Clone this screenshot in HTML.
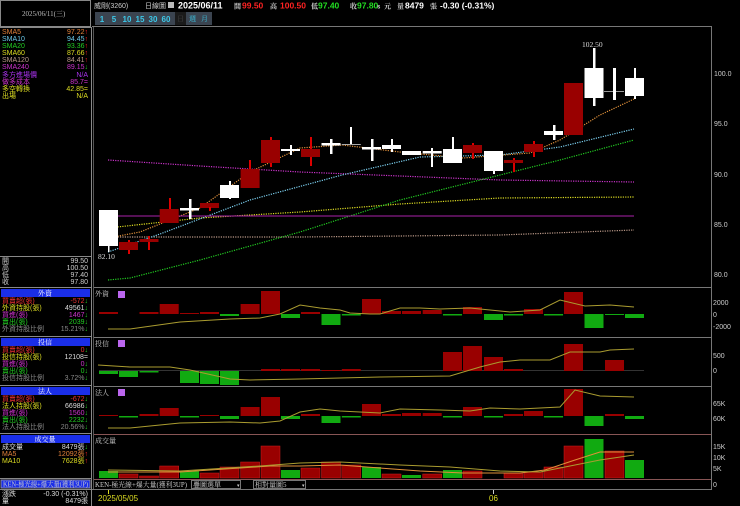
<!DOCTYPE html>
<html><head><meta charset="utf-8"><style>
html,body{margin:0;padding:0;background:#000;width:740px;height:506px;overflow:hidden}
svg{display:block}
text{font-family:"Liberation Sans","Noto Sans CJK TC",sans-serif;font-size:7px}
.c{font-family:"Liberation Serif","Noto Serif CJK SC",serif;font-size:7px}
</style></head><body>
<svg width="740" height="506" viewBox="0 0 740 506" xmlns="http://www.w3.org/2000/svg">
<rect width="740" height="506" fill="#000"/>
<rect x="0.5" y="0.5" width="90" height="26" fill="none" stroke="#888"/>
<text x="22" y="16" fill="#bbb" class="c">2025/06/11(三)</text>
<line x1="91.5" y1="27" x2="91.5" y2="506" stroke="#888"/>
<line x1="0" y1="27.5" x2="91" y2="27.5" stroke="#888"/>
<g class="c">
<text x="2" y="34" fill="#e0803a">SMA5</text><text x="88" y="34" fill="#e0803a" text-anchor="end">97.22<tspan fill="#f22">↑</tspan></text>
<text x="2" y="41" fill="#6cc8e8">SMA10</text><text x="88" y="41" fill="#6cc8e8" text-anchor="end">94.45<tspan fill="#f22">↑</tspan></text>
<text x="2" y="48" fill="#2c2">SMA20</text><text x="88" y="48" fill="#2c2" text-anchor="end">93.36<tspan fill="#f22">↑</tspan></text>
<text x="2" y="55" fill="#dd2">SMA60</text><text x="88" y="55" fill="#dd2" text-anchor="end">87.66<tspan fill="#f22">↑</tspan></text>
<text x="2" y="62" fill="#b98">SMA120</text><text x="88" y="62" fill="#b98" text-anchor="end">84.41<tspan fill="#f22">↑</tspan></text>
<text x="2" y="69" fill="#c3c">SMA240</text><text x="88" y="69" fill="#c3c" text-anchor="end">89.15<tspan fill="#2c2">↓</tspan></text>
<text x="2" y="77" fill="#a3e">多方進場價</text><text x="88" y="77" fill="#a3e" text-anchor="end">N/A</text>
<text x="2" y="84" fill="#c3c">做多成本</text><text x="88" y="84" fill="#c3c" text-anchor="end">85.7=</text>
<text x="2" y="91" fill="#dd2">多空轉換</text><text x="88" y="91" fill="#dd2" text-anchor="end">42.85=</text>
<text x="2" y="98" fill="#dd2">出場</text><text x="88" y="98" fill="#dd2" text-anchor="end">N/A</text>
</g>
<line x1="0" y1="256.5" x2="91" y2="256.5" stroke="#888"/>
<g class="c" fill="#ccc">
<text x="2" y="263">開</text><text x="88" y="263" text-anchor="end">99.50</text>
<text x="2" y="270">高</text><text x="88" y="270" text-anchor="end">100.50</text>
<text x="2" y="277">低</text><text x="88" y="277" text-anchor="end">97.40</text>
<text x="2" y="284">收</text><text x="88" y="284" text-anchor="end">97.80</text>
</g>
<line x1="0" y1="287.5" x2="91" y2="287.5" stroke="#888"/>
<rect x="1" y="289" width="89" height="8" fill="#1a2ee8"/>
<text x="45" y="295.5" fill="#fff" text-anchor="middle" class="c">外資</text>
<g class="c">
<text x="2" y="303" fill="#e33">買賣超(張)</text><text x="88" y="303" fill="#e33" text-anchor="end">-572<tspan fill="#2c2">↓</tspan></text>
<text x="2" y="310" fill="#dd2">外資持股(張)</text><text x="88" y="310" fill="#ddd" text-anchor="end">49561<tspan fill="#2c2">↓</tspan></text>
<text x="2" y="317" fill="#c3c">買進(張)</text><text x="88" y="317" fill="#c3c" text-anchor="end">1467<tspan fill="#2c2">↓</tspan></text>
<text x="2" y="324" fill="#2c2">賣出(張)</text><text x="88" y="324" fill="#2c2" text-anchor="end">2039<tspan fill="#2c2">↓</tspan></text>
<text x="2" y="331" fill="#888">外資持股比例</text><text x="88" y="331" fill="#888" text-anchor="end">15.21%<tspan fill="#2c2">↓</tspan></text>
</g>
<line x1="0" y1="336.5" x2="91" y2="336.5" stroke="#888"/>
<rect x="1" y="338" width="89" height="8" fill="#1a2ee8"/>
<text x="45" y="344.5" fill="#fff" text-anchor="middle" class="c">投信</text>
<g class="c">
<text x="2" y="352" fill="#e33">買賣超(張)</text><text x="88" y="352" fill="#e33" text-anchor="end">0<tspan fill="#2c2">↓</tspan></text>
<text x="2" y="359" fill="#dd2">投信持股(張)</text><text x="88" y="359" fill="#ddd" text-anchor="end">12108=</text>
<text x="2" y="366" fill="#c3c">買進(張)</text><text x="88" y="366" fill="#c3c" text-anchor="end">0<tspan fill="#2c2">↓</tspan></text>
<text x="2" y="373" fill="#2c2">賣出(張)</text><text x="88" y="373" fill="#2c2" text-anchor="end">0<tspan fill="#2c2">↓</tspan></text>
<text x="2" y="380" fill="#888">投信持股比例</text><text x="88" y="380" fill="#888" text-anchor="end">3.72%<tspan fill="#2c2">↓</tspan></text>
</g>
<line x1="0" y1="385.5" x2="91" y2="385.5" stroke="#888"/>
<rect x="1" y="387" width="89" height="8" fill="#1a2ee8"/>
<text x="45" y="393.5" fill="#fff" text-anchor="middle" class="c">法人</text>
<g class="c">
<text x="2" y="401" fill="#e33">買賣超(張)</text><text x="88" y="401" fill="#e33" text-anchor="end">-672<tspan fill="#2c2">↓</tspan></text>
<text x="2" y="408" fill="#dd2">法人持股(張)</text><text x="88" y="408" fill="#ddd" text-anchor="end">66986<tspan fill="#2c2">↓</tspan></text>
<text x="2" y="415" fill="#c3c">買進(張)</text><text x="88" y="415" fill="#c3c" text-anchor="end">1560<tspan fill="#2c2">↓</tspan></text>
<text x="2" y="422" fill="#2c2">賣出(張)</text><text x="88" y="422" fill="#2c2" text-anchor="end">2232<tspan fill="#2c2">↓</tspan></text>
<text x="2" y="429" fill="#888">法人持股比例</text><text x="88" y="429" fill="#888" text-anchor="end">20.56%<tspan fill="#2c2">↓</tspan></text>
</g>
<line x1="0" y1="433.5" x2="91" y2="433.5" stroke="#888"/>
<rect x="1" y="435" width="89" height="8" fill="#1a2ee8"/>
<text x="45" y="441.5" fill="#fff" text-anchor="middle" class="c">成交量</text>
<g class="c">
<text x="2" y="449" fill="#ddd">成交量</text><text x="88" y="449" fill="#ddd" text-anchor="end">8479張<tspan fill="#2c2">↓</tspan></text>
<text x="2" y="456" fill="#e0803a">MA5</text><text x="88" y="456" fill="#e0803a" text-anchor="end">12092張<tspan fill="#f22">↑</tspan></text>
<text x="2" y="463" fill="#dd2">MA10</text><text x="88" y="463" fill="#dd2" text-anchor="end">7628張<tspan fill="#f22">↑</tspan></text>
</g>
<line x1="0" y1="478.5" x2="91" y2="478.5" stroke="#888"/>
<rect x="1" y="480" width="89" height="8" fill="#1a2ee8" stroke="#88a"/>
<text x="3" y="486.5" fill="#ccc" class="c" textLength="85" lengthAdjust="spacingAndGlyphs">KEN-極光線+爆大量(獲利3UP)</text>
<line x1="0" y1="489.5" x2="91" y2="489.5" stroke="#888"/>
<g class="c" fill="#ddd">
<text x="2" y="496">漲跌</text><text x="88" y="496" text-anchor="end">-0.30 (-0.31%)</text>
<text x="2" y="503">量</text><text x="88" y="503" text-anchor="end">8479張</text>
</g>

<g class="c">
<text x="94" y="8" fill="#ccc">威剛(3260)</text>
<text x="145" y="8" fill="#ccc">日線圖</text>
<rect x="168" y="2" width="6" height="6" fill="#bbb"/>
</g>
<text x="178" y="8.5" fill="#fff" font-weight="bold" style="font-size:9px">2025/06/11</text>
<g font-weight="bold">
<text x="234" y="8.5" fill="#ccc" class="c">開</text><text x="242" y="8.5" fill="#f22" style="font-size:8.5px">99.50</text>
<text x="270" y="8.5" fill="#ccc" class="c">高</text><text x="280" y="8.5" fill="#f22" style="font-size:8.5px">100.50</text>
<text x="311" y="8.5" fill="#ccc" class="c">低</text><text x="318" y="8.5" fill="#2d2" style="font-size:8.5px">97.40</text>
<text x="350" y="8.5" fill="#ccc" class="c">收</text><text x="357" y="8.5" fill="#2d2" style="font-size:8.5px">97.80</text>
<text x="377" y="8.5" fill="#ccc" style="font-size:6px">s</text><text x="384" y="8.5" fill="#ccc" class="c">元</text>
<text x="397" y="8.5" fill="#ccc" class="c">量</text><text x="405" y="8.5" fill="#fff" style="font-size:8.5px">8479</text><text x="430" y="8.5" fill="#ccc" class="c">張</text>
<text x="440" y="8.5" fill="#fff" style="font-size:8.5px">-0.30 (-0.31%)</text>
</g>
<g>
<rect x="95" y="12" width="117" height="13" fill="#3b4450"/>
<rect x="175" y="12" width="11" height="13" fill="#1a1a1a"/>
<g fill="#3cc8e8" font-weight="bold" text-anchor="middle">
<text x="102" y="22" style="font-size:8px">1</text><text x="114" y="22" style="font-size:8px">5</text><text x="127" y="22" style="font-size:8px">10</text><text x="140" y="22" style="font-size:8px">15</text><text x="153" y="22" style="font-size:8px">30</text><text x="166" y="22" style="font-size:8px">60</text>
</g>
<text x="177" y="21" fill="#444" class="c">日</text><text x="189" y="21" fill="#3cc8e8" class="c">週</text><text x="201" y="21" fill="#3cc8e8" class="c">月</text>
</g>
<line x1="92" y1="26.5" x2="712" y2="26.5" stroke="#777"/>
<line x1="711.5" y1="26" x2="711.5" y2="490" stroke="#777"/>
<line x1="93.5" y1="27" x2="93.5" y2="490" stroke="#555"/>
<g fill="#ccc" class="c">
<text x="714" y="76">100.0</text><text x="714" y="126">95.0</text><text x="714" y="177">90.0</text><text x="714" y="227">85.0</text><text x="714" y="277">80.0</text>
</g>
<g fill="none" stroke-width="1.2" stroke-dasharray="1.2 1.2">
<polyline stroke="#c3c" points="108,160 200,166 300,172 400,176 500,180 634,182"/>
<polyline stroke="#b98" points="108,237 200,237 300,237 400,236 500,235 634,230"/>
<polyline stroke="#dd2" points="108,228 200,218 300,212 400,204 500,198 634,197"/>
<polyline stroke="#2c2" points="108,280 130,278 200,260 300,232 400,200 480,180 560,160 634,140"/>
<polyline stroke="#7cd0f0" points="108,252 160,234 250,200 342,175 420,157 500,155 560,147 634,129"/>
<polyline stroke="#e0903a" points="108,238 140,232 200,208 250,172 300,148 342,145 400,152 463,158 530,153 560,140 600,115 634,99"/>
</g>
<line x1="108" y1="216" x2="634" y2="216" stroke="#a2a" stroke-width="1"/>
<line x1="94" y1="287.5" x2="711" y2="287.5" stroke="#777"/>
<g>
<rect x="99" y="210" width="19" height="36" fill="#fff"/><rect x="108" y="246" width="1.5" height="6" fill="#fff"/>
<rect x="128" y="240" width="2" height="14" fill="#d00"/><rect x="119" y="242" width="19" height="8" fill="#900"/>
<rect x="148" y="236" width="2" height="14" fill="#d00"/><rect x="139.5" y="239" width="19" height="3" fill="#900"/>
<rect x="169" y="198" width="2" height="12" fill="#d00"/><rect x="159.7" y="209" width="19" height="14" fill="#900"/>
<rect x="189" y="199" width="2.5" height="20" fill="#fff"/><rect x="180" y="208" width="19" height="2.5" fill="#fff"/>
<rect x="200" y="203" width="19" height="5" fill="#900"/><rect x="209" y="207" width="2" height="4" fill="#d00"/>
<rect x="229" y="181" width="2" height="18" fill="#fff"/><rect x="220" y="185" width="19" height="13" fill="#fff"/>
<rect x="249" y="160" width="2" height="10" fill="#d00"/><rect x="240.6" y="169" width="19" height="19" fill="#900"/>
<rect x="270" y="137" width="2" height="30" fill="#d00"/><rect x="261" y="140" width="19" height="23" fill="#900"/>
<rect x="290" y="145" width="2" height="10" fill="#fff"/><rect x="281" y="149" width="19" height="2" fill="#fff"/>
<rect x="310" y="137" width="2" height="29" fill="#d00"/><rect x="301" y="149" width="19" height="8" fill="#900"/>
<rect x="330" y="139" width="2.5" height="15" fill="#fff"/><rect x="321.5" y="143" width="19" height="2.5" fill="#fff"/>
<rect x="350" y="127" width="2" height="18" fill="#fff"/><rect x="341.8" y="144" width="19" height="1" fill="#aaa"/>
<rect x="371" y="139" width="2.5" height="22" fill="#fff"/><rect x="362" y="147" width="19" height="2.5" fill="#fff"/>
<rect x="391" y="139" width="2" height="13" fill="#fff"/><rect x="382" y="145" width="19" height="4" fill="#fff"/>
<rect x="402" y="151" width="19" height="4" fill="#fff"/>
<rect x="431" y="148" width="2" height="19" fill="#fff"/><rect x="422.7" y="151" width="19" height="2.5" fill="#fff"/>
<rect x="452" y="137" width="2" height="14" fill="#fff"/><rect x="443" y="149" width="19" height="14" fill="#fff"/>
<rect x="472" y="143" width="2" height="16" fill="#d00"/><rect x="463" y="145" width="19" height="8" fill="#900"/>
<rect x="493" y="170" width="2" height="4" fill="#fff"/><rect x="484" y="151" width="19" height="20" fill="#fff"/>
<rect x="513" y="158" width="2" height="14" fill="#d00"/><rect x="504" y="160" width="19" height="3" fill="#900"/>
<rect x="533" y="141" width="2" height="16" fill="#d00"/><rect x="524" y="144" width="19" height="8" fill="#900"/>
<rect x="553" y="125" width="2.5" height="15" fill="#fff"/><rect x="544" y="131" width="19" height="4" fill="#fff"/>
<rect x="564" y="83" width="19" height="52" fill="#900"/>
<rect x="593" y="48" width="2.5" height="58" fill="#fff"/><rect x="584.5" y="68" width="19" height="30" fill="#fff"/>
<rect x="604" y="91" width="20" height="1" fill="#999"/><rect x="613" y="68" width="3" height="32" fill="#fff"/>
<rect x="634" y="68" width="2" height="31" fill="#fff"/><rect x="625" y="78" width="19" height="18" fill="#fff"/>
</g>
<text x="582" y="47" fill="#ddd" class="c" style="font-size:7.5px">102.50</text>
<text x="98" y="259" fill="#ddd" class="c" style="font-size:7.5px">82.10</text>

<text x="95" y="296" fill="#ccc" class="c">外資</text>
<rect x="118" y="291" width="7" height="7" fill="#b6e"/>
<g fill="#900">
<rect x="99" y="312" width="19" height="2"/><rect x="139.5" y="312" width="19" height="2"/><rect x="159.7" y="304" width="19" height="10"/><rect x="180" y="313" width="19" height="1"/><rect x="200" y="312" width="19" height="2"/><rect x="240.6" y="304" width="19" height="10"/><rect x="261" y="291" width="19" height="23"/><rect x="301" y="312" width="19" height="2"/><rect x="362" y="299" width="19" height="15"/><rect x="382" y="311" width="19" height="3"/><rect x="402" y="311" width="19" height="3"/><rect x="422.7" y="310" width="19" height="4"/><rect x="463" y="307" width="19" height="7"/><rect x="524" y="309" width="19" height="5"/><rect x="564" y="292" width="19" height="22"/>
</g>
<g fill="#1a1">
<rect x="220" y="314" width="19" height="2"/><rect x="281" y="314" width="19" height="4"/><rect x="321.5" y="314" width="19" height="11"/><rect x="341.8" y="314" width="19" height="1.5"/><rect x="443" y="314" width="19" height="1.5"/><rect x="484" y="314" width="19" height="6"/><rect x="504" y="314" width="19" height="1.5"/><rect x="544" y="314" width="19" height="1.5"/><rect x="584.5" y="314" width="19" height="14"/><rect x="605" y="314" width="19" height="1"/><rect x="625" y="314" width="19" height="4"/>
</g>
<polyline fill="none" stroke="#aa9c30" stroke-width="1" points="108,329 130,329 180,322 230,319 260,318 280,314 300,305 320,308 340,310 350,313 370,314 380,314 400,308 420,308 440,309 470,308 480,309 510,312 540,310 560,300 585,306 610,305 634,307"/>
<g fill="#ccc" class="c"><text x="713" y="305">2000</text><text x="713" y="317">0</text><text x="713" y="329">-2000</text></g>
<line x1="94" y1="337.5" x2="711" y2="337.5" stroke="#777"/>

<text x="95" y="346" fill="#ccc" class="c">投信</text>
<rect x="118" y="340" width="7" height="7" fill="#b6e"/>
<line x1="99" y1="370.5" x2="644" y2="370.5" stroke="#333"/>
<g fill="#1a1">
<rect x="99" y="371" width="19" height="3"/><rect x="119" y="371" width="19" height="6"/><rect x="139.5" y="371" width="19" height="1.5"/><rect x="180" y="371" width="19" height="12"/><rect x="200" y="371" width="19" height="13"/><rect x="220" y="371" width="19" height="14"/>
</g>
<g fill="#900">
<rect x="261" y="369" width="19" height="2"/><rect x="281" y="369" width="19" height="2"/><rect x="301" y="369" width="19" height="2"/><rect x="321.5" y="370" width="19" height="1"/><rect x="341.8" y="369" width="19" height="2"/><rect x="443" y="352" width="19" height="19"/><rect x="463" y="346" width="19" height="25"/><rect x="484" y="357" width="19" height="14"/><rect x="504" y="369" width="19" height="2"/><rect x="564" y="344" width="19" height="27"/><rect x="605" y="360" width="19" height="11"/>
</g>
<polyline fill="none" stroke="#aa9c30" stroke-width="1" points="98,365 130,367 170,367 190,370 230,379 250,380 300,379 340,378 380,377 450,376 480,367 500,362 520,360 550,360 570,352 600,352 610,350 634,349"/>
<g fill="#ccc" class="c"><text x="713" y="358">500</text><text x="713" y="373">0</text></g>
<line x1="94" y1="386.5" x2="711" y2="386.5" stroke="#777"/>

<text x="95" y="395" fill="#ccc" class="c">法人</text>
<rect x="118" y="389" width="7" height="7" fill="#b6e"/>
<g fill="#900">
<rect x="99" y="415" width="19" height="1"/><rect x="139.5" y="414" width="19" height="2"/><rect x="159.7" y="408" width="19" height="8"/><rect x="200" y="415" width="19" height="1"/><rect x="240.6" y="407" width="19" height="9"/><rect x="261" y="397" width="19" height="19"/><rect x="301" y="414" width="19" height="2"/><rect x="362" y="404" width="19" height="12"/><rect x="382" y="414" width="19" height="2"/><rect x="402" y="413" width="19" height="3"/><rect x="422.7" y="413" width="19" height="3"/><rect x="463" y="407" width="19" height="9"/><rect x="504" y="414" width="19" height="2"/><rect x="524" y="411" width="19" height="5"/><rect x="564" y="389" width="19" height="27"/><rect x="605" y="414" width="19" height="2"/>
</g>
<g fill="#1a1">
<rect x="119" y="416" width="19" height="1.5"/><rect x="180" y="416" width="19" height="1.5"/><rect x="220" y="416" width="19" height="3"/><rect x="281" y="416" width="19" height="3"/><rect x="321.5" y="416" width="19" height="7"/><rect x="341.8" y="416" width="19" height="1.5"/><rect x="443" y="416" width="19" height="1.5"/><rect x="484" y="416" width="19" height="1.5"/><rect x="544" y="416" width="19" height="1.5"/><rect x="584.5" y="416" width="19" height="10"/><rect x="625" y="416" width="19" height="3"/>
</g>
<polyline fill="none" stroke="#aa9c30" stroke-width="1" points="108,428 130,428 180,423 230,422 260,423 280,421 300,412 320,409 340,411 380,413 400,409 440,410 470,411 490,408 520,409 560,407 575,390 600,396 634,397"/>
<g fill="#ccc" class="c"><text x="713" y="406">65K</text><text x="713" y="421">60K</text></g>
<line x1="94" y1="434.5" x2="711" y2="434.5" stroke="#855"/>

<text x="95" y="443" fill="#ccc" class="c">成交量</text>
<g fill="#1a1">
<rect x="99" y="471" width="19" height="7"/><rect x="180" y="471" width="19" height="7"/><rect x="281" y="470" width="19" height="8"/><rect x="362" y="467" width="19" height="11"/><rect x="402" y="475" width="19" height="3"/><rect x="443" y="470" width="19" height="8"/><rect x="584.5" y="439" width="19" height="39"/><rect x="625" y="460" width="19" height="18"/>
</g>
<g fill="#900" stroke="#c22" stroke-width="0.5">
<rect x="119" y="474" width="19" height="4"/><rect x="139.5" y="476" width="19" height="2"/><rect x="159.7" y="466" width="19" height="12"/><rect x="200" y="473" width="19" height="5"/><rect x="220" y="467" width="19" height="11"/><rect x="240.6" y="462" width="19" height="16"/><rect x="261" y="446" width="19" height="32"/><rect x="301" y="468" width="19" height="10"/><rect x="321.5" y="462" width="19" height="16"/><rect x="341.8" y="465" width="19" height="13"/><rect x="382" y="474" width="19" height="4"/><rect x="422.7" y="474" width="19" height="4"/><rect x="463" y="471" width="19" height="7"/><rect x="504" y="473" width="19" height="5"/><rect x="524" y="472" width="19" height="6"/><rect x="544" y="467" width="19" height="11"/><rect x="564" y="446" width="19" height="32"/><rect x="605" y="451" width="19" height="27"/>
</g>
<polyline fill="none" stroke="#e0903a" stroke-width="1" points="108,472 180,472 240,468 270,466 300,466 340,465 380,468 420,471 463,473 520,473 545,470 575,460 600,452 634,452"/>
<polyline fill="none" stroke="#aa9c30" stroke-width="1" points="108,470 180,471 260,466 300,463 340,462 400,465 450,467 500,471 540,472 570,466 600,460 634,455"/>
<g fill="#ccc" class="c"><text x="713" y="449">15K</text><text x="713" y="460">10K</text><text x="713" y="471">5K</text><text x="713" y="487">0</text></g>
<line x1="94" y1="479.5" x2="711" y2="479.5" stroke="#855"/>

<text x="95" y="487" fill="#ccc" class="c" textLength="92" lengthAdjust="spacingAndGlyphs">KEN-極光線+爆大量(獲利3UP)</text>
<rect x="191.5" y="480.5" width="49" height="8" fill="#000" stroke="#777"/>
<text x="193" y="487" fill="#ccc" class="c">疊圖選單</text><text x="237" y="487" fill="#ccc" style="font-size:5px">▾</text>
<rect x="253.5" y="480.5" width="52" height="8" fill="#000" stroke="#777"/>
<text x="255" y="487" fill="#ccc" class="c">相對量圖5</text><text x="302" y="487" fill="#ccc" style="font-size:5px">▾</text>
<line x1="92" y1="489.5" x2="712" y2="489.5" stroke="#777"/>
<line x1="108.5" y1="490" x2="108.5" y2="494" stroke="#dd2"/>
<line x1="493.5" y1="490" x2="493.5" y2="494" stroke="#ccc"/>
<text x="98" y="501" fill="#dd2" style="font-size:8px">2025/05/05</text>
<text x="489" y="501" fill="#dd2" style="font-size:8px">06</text>
</svg>
</body></html>
